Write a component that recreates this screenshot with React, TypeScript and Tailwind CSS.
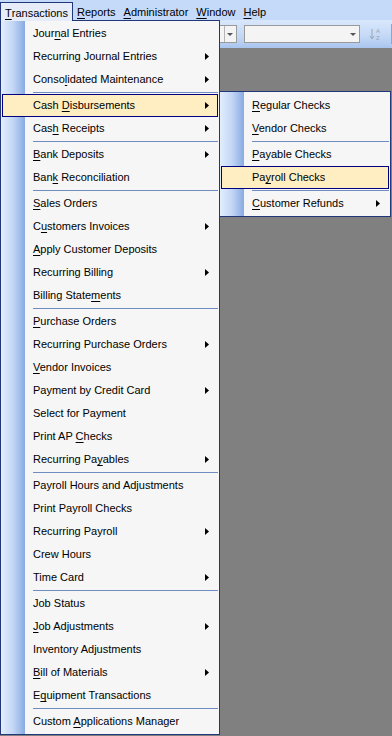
import React from "react";

type Item = { label: string; u?: number; sub?: boolean; hot?: boolean } | "sep";

const mainItems: Item[] = [
  { label: "Journal Entries", u: 4 },
  { label: "Recurring Journal Entries", sub: true },
  { label: "Consolidated Maintenance", u: 5, sub: true },
  "sep",
  { label: "Cash Disbursements", u: 5, sub: true, hot: true },
  { label: "Cash Receipts", u: 3, sub: true },
  "sep",
  { label: "Bank Deposits", u: 0, sub: true },
  { label: "Bank Reconciliation", u: 3 },
  "sep",
  { label: "Sales Orders", u: 0 },
  { label: "Customers Invoices", u: 1, sub: true },
  { label: "Apply Customer Deposits", u: 0 },
  { label: "Recurring Billing", sub: true },
  { label: "Billing Statements", u: 13 },
  "sep",
  { label: "Purchase Orders", u: 0 },
  { label: "Recurring Purchase Orders", sub: true },
  { label: "Vendor Invoices", u: 0 },
  { label: "Payment by Credit Card", sub: true },
  { label: "Select for Payment" },
  { label: "Print AP Checks", u: 9 },
  { label: "Recurring Payables", u: 12, sub: true },
  "sep",
  { label: "Payroll Hours and Adjustments" },
  { label: "Print Payroll Checks" },
  { label: "Recurring Payroll", sub: true },
  { label: "Crew Hours" },
  { label: "Time Card", sub: true },
  "sep",
  { label: "Job Status" },
  { label: "Job Adjustments", u: 0, sub: true },
  { label: "Inventory Adjustments" },
  { label: "Bill of Materials", u: 0, sub: true },
  { label: "Equipment Transactions", u: 1 },
  "sep",
  { label: "Custom Applications Manager", u: 7 },
];

const subItems: Item[] = [
  { label: "Regular Checks", u: 0 },
  { label: "Vendor Checks", u: 0 },
  "sep",
  { label: "Payable Checks", u: 0 },
  { label: "Payroll Checks", u: 2, hot: true },
  "sep",
  { label: "Customer Refunds", u: 0, sub: true },
];

function Mnemonic({ text, u }: { text: string; u?: number }) {
  if (u === undefined) return <>{text}</>;
  return (
    <>
      {text.slice(0, u)}
      <span className="underline underline-offset-2">{text[u]}</span>
      {text.slice(u + 1)}
    </>
  );
}

function Arrow() {
  return (
    <svg width="4" height="7" viewBox="0 0 4 7" className="shrink-0">
      <path d="M0 0 L4 3.5 L0 7 Z" fill="#000" />
    </svg>
  );
}

function MenuRows({ items }: { items: Item[] }) {
  return (
    <>
      {items.map((it, i) =>
        it === "sep" ? (
          <div key={i} className="h-[3px] flex items-center pl-[32px] pr-[1px]">
            <div className="h-px w-full bg-[#6f8dc1]" />
          </div>
        ) : (
          <div
            key={i}
            className={
              "mx-px h-[23px] flex items-center pl-[30px] pr-[8px] border " +
              (it.hot ? "bg-[#ffeec2] border-[#000080]" : "border-transparent")
            }
          >
            <span className="flex-1 whitespace-nowrap">
              <Mnemonic text={it.label} u={it.u} />
            </span>
            {it.sub && <Arrow />}
          </div>
        )
      )}
    </>
  );
}

const stripBg =
  "bg-[linear-gradient(90deg,#e3eefd_0px,#c3d6f5_12px,#88abe2_24px,#f6f6f6_24px)]";

export default function App() {
  const top = [
    { label: "Reports", u: 0 },
    { label: "Administrator", u: 0 },
    { label: "Window", u: 0 },
    { label: "Help", u: 0 },
  ];
  return (
    <div className="relative w-[392px] h-[736px] overflow-hidden bg-[#808080] font-['Liberation_Sans',Arial,sans-serif] text-[11px] text-black">
      {/* menu bar */}
      <div className="h-[20px] flex items-end bg-[#c4daf8]">
        <div className="relative z-20 h-[19px] -mb-px px-[4px] flex items-start pt-[2px] border border-b-0 border-[#22377a] bg-[#e6edf8]">
          <Mnemonic text="Transactions" u={0} />
        </div>
        {top.map((t) => (
          <div key={t.label} className="h-[18px] px-[4px] flex items-start pt-[2px]">
            <Mnemonic text={t.label} u={t.u} />
          </div>
        ))}
      </div>

      {/* toolbar */}
      <div className="h-[28px] flex items-center bg-[linear-gradient(180deg,#d9e7fb,#c3d8f6_60%,#a9c5ee)]">
        <div className="ml-[150px] w-[87px] h-[18px] flex border border-[#9a9a9a] bg-[#f4f4f4]">
          <div className="flex-1" />
          <div className="w-[12px] border-l border-[#b5b5b5] flex items-center justify-center">
            <div className="w-0 h-0 border-x-[3px] border-x-transparent border-t-[3px] border-t-[#555]" />
          </div>
        </div>
        <div className="ml-[7px] w-[117px] h-[18px] flex items-center justify-end pr-[3px] border border-[#9a9a9a] bg-[#f4f4f4]">
          <div className="w-0 h-0 border-x-[3px] border-x-transparent border-t-[3px] border-t-[#555]" />
        </div>
        <div className="ml-[8px] w-[16px] h-[16px] flex items-center">
          <svg width="16" height="16" viewBox="0 0 16 16">
            <path d="M4 3 V12 M2 10 L4 13 L6 10" stroke="#9aa6b8" strokeWidth="1" fill="none" />
            <text x="8" y="7" fontSize="6" fill="#9aa6b8" fontFamily="Liberation Sans">A</text>
            <text x="8" y="14" fontSize="6" fill="#9aa6b8" fontFamily="Liberation Sans">Z</text>
          </svg>
        </div>
        <div className="ml-[7px] w-px h-[20px] bg-[#8aa6d2]" />
      </div>

      {/* main dropdown */}
      <div className={"absolute z-10 left-0 top-[20px] w-[220px] py-px border border-[#22377a] " + stripBg}>
        <MenuRows items={mainItems} />
      </div>

      {/* submenu */}
      <div className={"absolute z-10 left-[219px] top-[91px] w-[172px] pt-[2px] pb-px border border-[#22377a] " + stripBg}>
        <MenuRows items={subItems} />
      </div>
    </div>
  );
}
